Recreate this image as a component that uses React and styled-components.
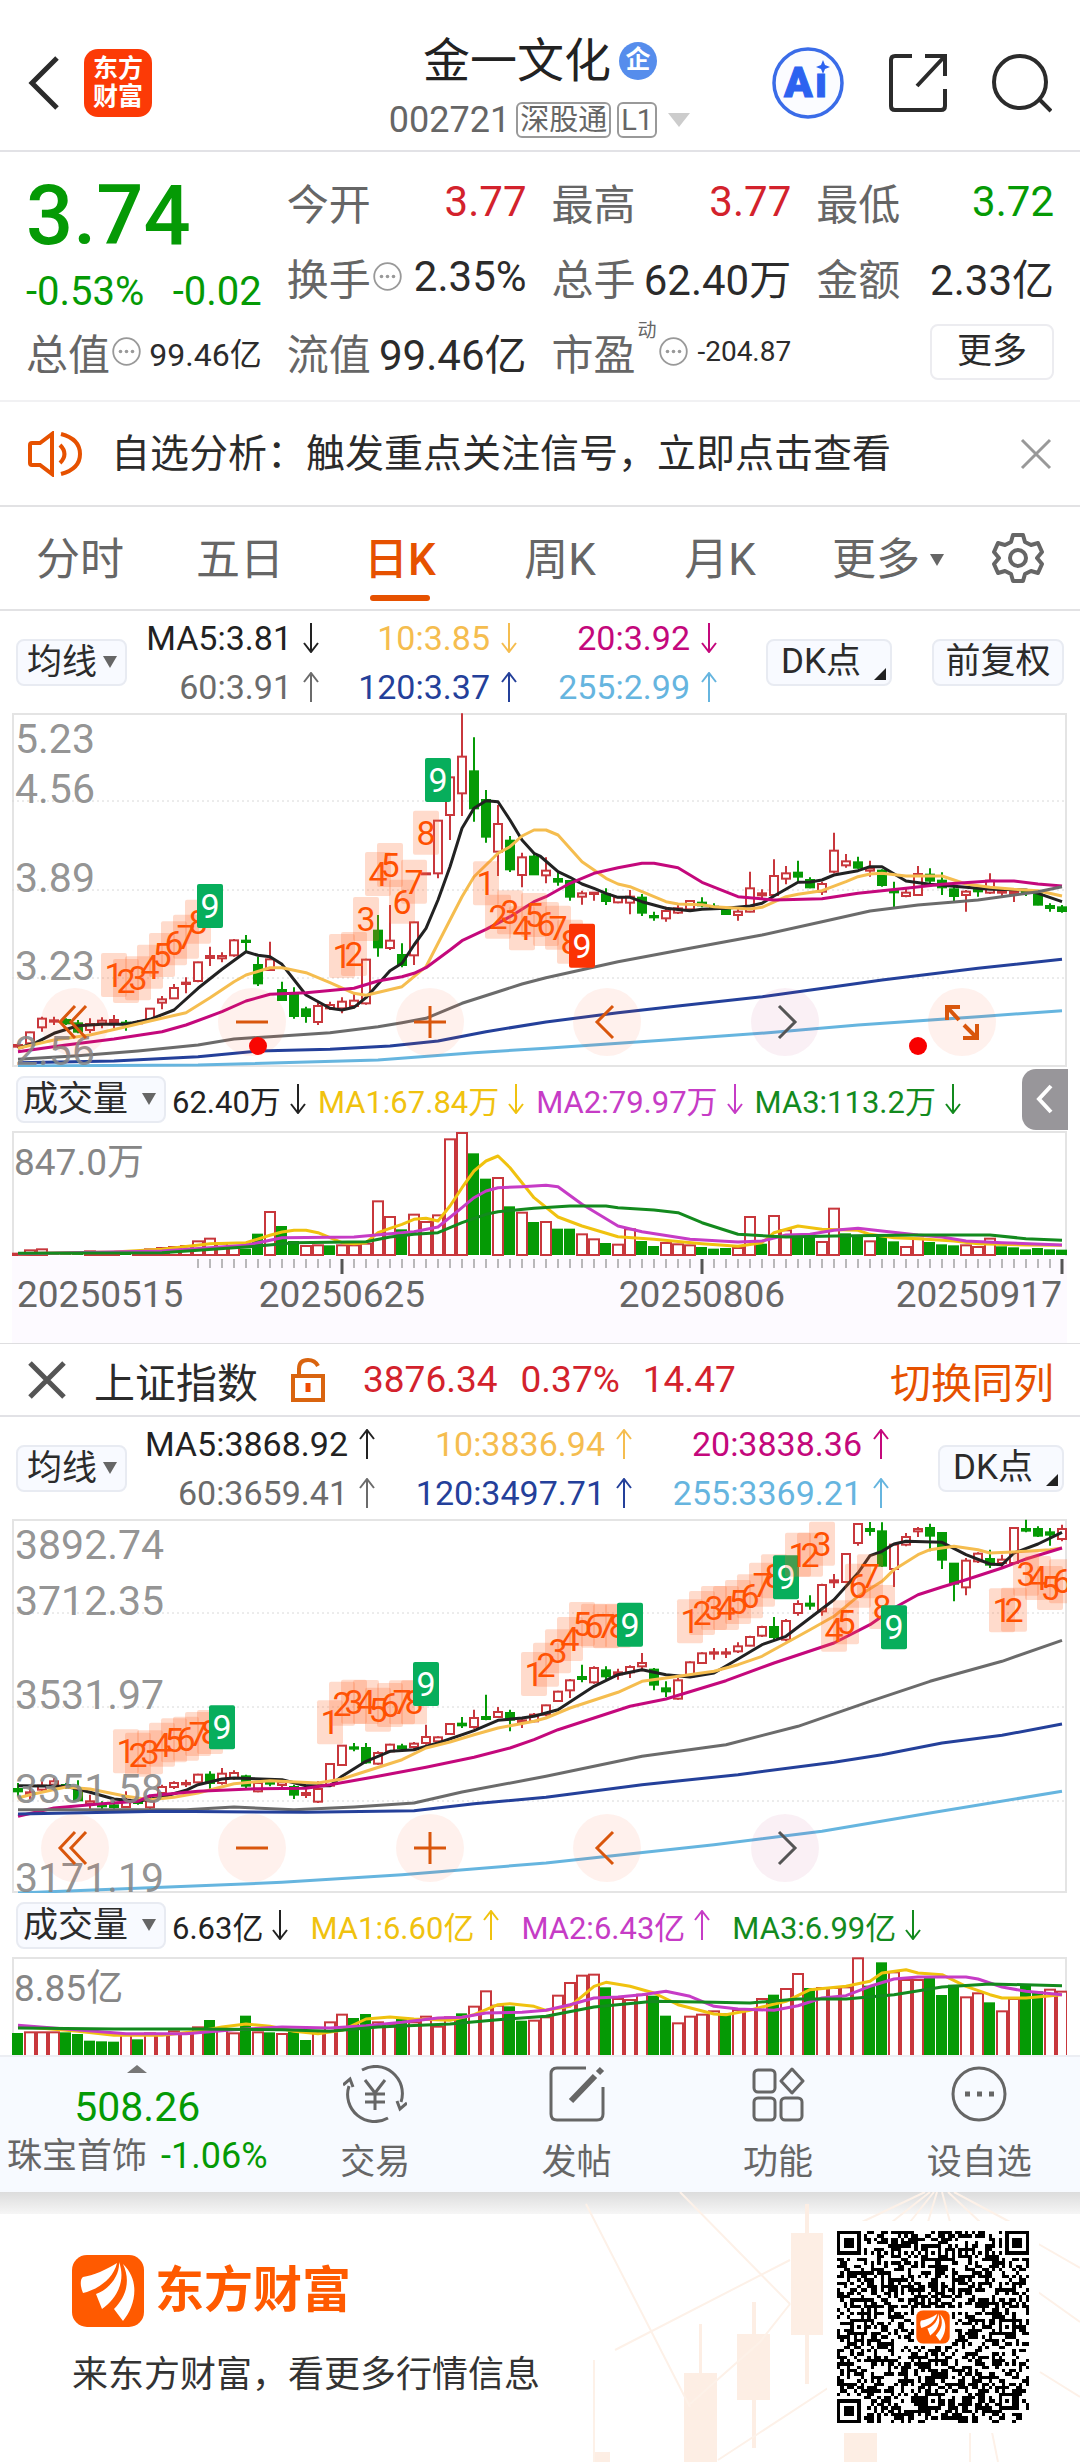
import React, { useMemo, useState } from 'react';
import styled, { createGlobalStyle, css } from 'styled-components';

const GlobalStyle = createGlobalStyle`
  * {
    box-sizing: border-box;
  }
  body {
    margin: 0;
    background: #fff;
    color: #2b2b2b;
    font-family: Roboto, 'Noto Sans CJK SC', sans-serif;
    font-size: 34px;
  }
  button, select {
    font: inherit;
    color: inherit;
    margin: 0;
    padding: 0;
    border: none;
    background: none;
    cursor: pointer;
  }
  svg {
    display: block;
  }
`;

const UP = '#c8373c';
const DOWN = '#059a05';
const ORANGE = '#e65100';
const LINE_COLORS = ['#222', '#f5bd4f', '#c4087c', '#6b6b6b', '#24409a', '#66b5df'];
const VOLUME_COLORS = ['#f0c20f', '#c63cc6', '#138a1e'];
const STEP = 12;

/* ---------- header ---------- */

const Header = styled.header`
  display: grid;
  grid-template-columns: 1fr auto 1fr;
  align-items: center;
  height: 152px;
  padding: 16px 28px 0;
  border-bottom: 2px solid #e2e2e6;
`;

const HeaderSide = styled.div`
  display: flex;
  align-items: center;
  justify-content: ${({ $end }) => ($end ? 'flex-end' : 'flex-start')};
  gap: ${({ $end }) => ($end ? '44px' : '24px')};
`;

const AppBadge = styled.a`
  width: 68px;
  height: 68px;
  padding: 6px 0;
  border-radius: 14px;
  background: #fc3a06;
  color: #fff;
  font-size: 25px;
  font-weight: 700;
  line-height: 28px;
  text-align: center;
  text-decoration: none;
`;

const TitleBlock = styled.div`
  display: flex;
  flex-direction: column;
  align-items: center;
  margin-top: 14px;
`;

const StockName = styled.h1`
  display: flex;
  align-items: center;
  gap: 8px;
  margin: 0;
  font-size: 47px;
  font-weight: 400;
  line-height: 60px;
  color: #222;
`;

const CompanyMark = styled.span`
  width: 38px;
  height: 38px;
  border-radius: 50%;
  background: #568dec;
  color: #fff;
  font-size: 25px;
  font-weight: 700;
  line-height: 36px;
  text-align: center;
`;

const StockCode = styled.div`
  display: flex;
  align-items: center;
  gap: 6px;
  height: 58px;
  font-size: 36px;
  color: #666;
`;

const Tag = styled.span`
  height: 36px;
  padding: 0 2px;
  border: 2px solid #999;
  border-radius: 6px;
  font-size: 29px;
  line-height: 32px;
`;

/* ---------- quote ---------- */

const Quote = styled.section`
  display: grid;
  grid-template-columns: 236fr 240fr 240fr 238fr;
  grid-auto-rows: 75px;
  column-gap: 25px;
  padding: 12px 26px 11px;
  border-bottom: 2px solid #f1f1f3;
`;

const PriceCell = styled.div`
  grid-row: span 2;
  color: ${DOWN};
`;

const Price = styled.div`
  font-size: 83px;
  font-weight: 500;
  line-height: 104px;
`;

const Change = styled.div`
  display: flex;
  justify-content: space-between;
  font-size: 40px;
  line-height: 48px;
`;

const QuoteCell = styled.div`
  display: flex;
  align-items: center;
  justify-content: space-between;
  white-space: nowrap;
`;

const QuoteLabel = styled.span`
  display: flex;
  align-items: center;
  gap: 2px;
  font-size: 42px;
  color: #666;
`;

const QuoteValue = styled.span`
  font-size: ${({ $size }) => $size || 42}px;
  color: ${({ $color }) => $color || '#2b2b2b'};
`;

const Sup = styled.sup`
  align-self: flex-start;
  font-size: 19px;
  line-height: 20px;
`;

const MoreButton = styled.button`
  justify-self: end;
  align-self: center;
  width: 124px;
  height: 56px;
  border: 2px solid #ececf0;
  border-radius: 8px;
  font-size: 35px;
  line-height: 48px;
`;

/* ---------- alert + tabs ---------- */

const Alert = styled.section`
  display: flex;
  align-items: center;
  height: 105px;
  padding: 0 28px;
  border-bottom: 2px solid #e2e2e4;
`;

const AlertText = styled.p`
  flex: 1;
  margin: 0 0 0 29px;
  font-size: 39px;
  line-height: 56px;
`;

const Tabs = styled.nav`
  display: grid;
  grid-template-columns: repeat(5, 160fr) 176fr 104fr;
  height: 104px;
  border-bottom: 2px solid #e2e2e4;
`;

const Tab = styled.button`
  position: relative;
  display: flex;
  align-items: center;
  justify-content: center;
  gap: 10px;
  padding-top: 3px;
  font-size: 44px;
  line-height: 60px;
  color: #666;
  ${({ $active }) =>
    $active &&
    css`
      color: ${ORANGE};
      font-weight: 500;
      &::after {
        content: '';
        position: absolute;
        bottom: 8px;
        left: 50%;
        width: 60px;
        height: 6px;
        margin-left: -30px;
        border-radius: 3px;
        background: ${ORANGE};
      }
    `}
`;

const SettingsTab = styled(Tab)`
  justify-content: flex-start;
  padding: 0 0 0 16px;
`;

/* ---------- indicator rows ---------- */

const IndicatorBar = styled.div`
  display: flex;
  align-items: center;
  height: 102px;
  padding: 0 16px;
`;

const Picker = styled.label`
  display: flex;
  align-items: center;
  gap: ${({ $gap }) => $gap}px;
  height: 47px;
  padding: 0 8px 0 ${({ $pad }) => $pad}px;
  border: 2px solid #e8ebf2;
  border-radius: 8px;
  background: #f8faff;
  select {
    appearance: none;
    height: 43px;
    font-size: 35px;
    line-height: 43px;
    outline: none;
  }
`;

const CornerButton = styled.button`
  position: relative;
  width: ${({ $width }) => $width}px;
  height: 47px;
  padding-right: ${({ $corner }) => ($corner ? 16 : 0)}px;
  border: 2px solid #e8ebf2;
  border-radius: 8px;
  background: #f8faff;
  font-size: 35px;
  line-height: 42px;
  ${({ $corner }) =>
    $corner &&
    css`
      &::after {
        content: '';
        position: absolute;
        right: 4px;
        bottom: 4px;
        border-left: 12px solid transparent;
        border-bottom: 12px solid #222;
      }
    `}
`;

const Averages = styled.div`
  display: grid;
  grid-template-columns: ${({ $columns }) => $columns};
  grid-auto-rows: 49px;
  margin-right: auto;
`;

const Reading = styled.span`
  display: flex;
  align-items: center;
  justify-content: flex-end;
  gap: ${({ $gap }) => $gap || 11}px;
  color: ${({ $color }) => $color};
  white-space: nowrap;
`;

const ButtonGroup = styled.div`
  display: flex;
  gap: 40px;
`;

const VolumeBar = styled.div`
  position: relative;
  display: flex;
  align-items: center;
  gap: 6px;
  height: 64px;
  padding: 0 16px;
  font-size: 31px;
`;

const VolumeReadings = styled.div`
  display: flex;
  gap: ${({ $gap }) => $gap}px;
`;

const Drawer = styled.button`
  display: flex;
  align-items: center;
  justify-content: center;
  width: 46px;
  height: 61px;
  margin: 0 -4px 0 auto;
  border-radius: 14px 0 0 14px;
  background: #98969a;
`;

/* ---------- charts ---------- */

const ChartBox = styled.div`
  position: relative;
  margin: 0 13px 0 12px;
  svg {
    width: 100%;
    height: auto;
  }
`;

const AxisBox = styled(ChartBox)`
  background: #fdfaff;
`;

const Divider = styled.hr`
  height: 1px;
  margin: 0;
  border: none;
  background: #dedee0;
`;

const ChartControls = styled.div`
  position: absolute;
  left: 29px;
  right: 71px;
  bottom: 11px;
  display: flex;
  justify-content: space-between;
`;

const RoundButton = styled.button`
  display: flex;
  align-items: center;
  justify-content: center;
  width: 68px;
  height: 68px;
  border-radius: 50%;
  background: ${({ $muted }) => ($muted ? 'rgba(190, 40, 120, 0.07)' : 'rgba(255, 80, 30, 0.08)')};
  color: ${({ $muted }) => ($muted ? '#555' : '#d9560c')};
  visibility: ${({ $hidden }) => ($hidden ? 'hidden' : 'visible')};
  svg {
    width: 40px;
    height: 40px;
  }
`;

/* ---------- index ---------- */

const IndexBar = styled.section`
  display: flex;
  align-items: center;
  height: 73px;
  padding: 0 26px 0 28px;
  border-bottom: 2px solid #e2e2e6;
  font-size: 41px;
`;

const IndexName = styled.h2`
  margin: 0 33px 0 28px;
  font-size: 41px;
  font-weight: 400;
`;

const IndexValues = styled.div`
  display: flex;
  gap: 23px;
  margin-left: 38px;
  font-size: 37px;
  color: #d3222c;
`;

const SwitchLink = styled.a`
  margin-left: auto;
  color: ${ORANGE};
  text-decoration: none;
`;

/* ---------- bottom ---------- */

const BottomBar = styled.nav`
  display: grid;
  grid-template-columns: 274fr repeat(4, 201fr);
  height: 137px;
  background: #f7faff;
  border-top: 2px solid #eceef3;
`;

const Sector = styled.button`
  display: flex;
  flex-direction: column;
  align-items: center;
  padding-top: 8px;
  color: ${DOWN};
  strong {
    margin-top: 8px;
    font-size: 41px;
    font-weight: 400;
    line-height: 52px;
  }
  span {
    line-height: 46px;
    font-size: 36px;
    white-space: nowrap;
  }
  em {
    margin-right: 14px;
    font-style: normal;
    font-size: 35px;
    color: #666;
  }
`;

const Action = styled.button`
  display: flex;
  flex-direction: column;
  align-items: center;
  gap: 18px;
  padding-top: 8px;
  font-size: 35px;
  line-height: 44px;
  color: #666;
`;

const Footer = styled.footer`
  position: relative;
  display: flex;
  align-items: flex-start;
  justify-content: space-between;
  height: 270px;
  padding: 39px 51px 0 72px;
  overflow: hidden;
  background: #fff;
  &::before {
    content: '';
    position: absolute;
    top: 0;
    left: 0;
    right: 0;
    height: 22px;
    background: linear-gradient(#dcdcdc, #f6f6f6);
  }
`;

const FooterArt = styled.svg`
  position: absolute;
  right: 0;
  top: 0;
`;

const Brand = styled.div`
  position: relative;
  padding-top: 24px;
`;

const BrandRow = styled.div`
  display: flex;
  align-items: center;
  gap: 11px;
  font-size: 49px;
  font-weight: 700;
  line-height: 72px;
  color: #ff5a00;
`;

const Slogan = styled.p`
  margin: 22px 0 0;
  font-size: 36px;
  line-height: 52px;
  color: #333;
`;

const QrBox = styled.div`
  position: relative;
  margin: -10px;
  padding: 10px;
  background: #fff;
`;

/* ---------- data: distances from the top edge, three per pixel ---------- */

// [direction, high, body top, body bottom, low]
const stockCandles = [
  ['r', 1030, 1035, 1040, 1045], ['r', 995, 997, 1030, 1035], ['r', 950, 956, 982, 995], ['r', 950, 961, 965, 975],
  ['g', 955, 960, 970, 975], ['g', 960, 970, 995, 1000], ['r', 955, 972, 990, 1000], ['r', 952, 962, 970, 985],
  ['r', 945, 960, 966, 985], ['g', 960, 968, 972, 992], ['r', 960, 967, 969, 975], ['r', 924, 926, 960, 962],
  ['r', 888, 898, 908, 928], ['r', 852, 864, 895, 897], ['r', 832, 848, 852, 880], ['r', 785, 787, 843, 847],
  ['r', 740, 768, 774, 798], ['r', 757, 768, 775, 787], ['r', 717, 721, 766, 770], ['g', 705, 722, 726, 753],
  ['g', 770, 795, 850, 858], ['r', 725, 778, 810, 812], ['g', 845, 870, 900, 903], ['g', 862, 882, 948, 956],
  ['g', 920, 928, 948, 968], ['r', 905, 918, 966, 975], ['r', 905, 915, 925, 930], ['r', 892, 905, 925, 940],
  ['r', 880, 902, 918, 925], ['r', 776, 779, 910, 914], ['g', 645, 692, 742, 770], ['r', 615, 722, 744, 750],
  ['g', 730, 765, 795, 802], ['r', 665, 667, 766, 795], ['r', 519, 520, 522, 523], ['r', 360, 362, 520, 535],
  ['r', 228, 232, 345, 420], ['r', 40, 170, 280, 348], ['g', 112, 214, 325, 365], ['g', 270, 300, 410, 428],
  ['r', 315, 372, 455, 528], ['g', 408, 422, 508, 516], ['r', 458, 472, 525, 562], ['g', 460, 470, 523, 525],
  ['r', 472, 512, 526, 550], ['g', 515, 537, 545, 557], ['g', 540, 543, 590, 602], ['r', 572, 580, 590, 614],
  ['r', 577, 578, 582, 602], ['g', 565, 583, 603, 615], ['r', 590, 592, 607, 610], ['r', 570, 590, 608, 643],
  ['g', 582, 593, 638, 648], ['g', 635, 648, 652, 662], ['r', 620, 633, 655, 665], ['r', 612, 625, 638, 642],
  ['r', 600, 603, 628, 632], ['g', 592, 608, 616, 622], ['g', 610, 620, 624, 630], ['g', 620, 625, 642, 645],
  ['r', 625, 635, 645, 662], ['r', 515, 565, 635, 637], ['r', 568, 580, 586, 600], ['r', 478, 528, 585, 590],
  ['r', 498, 520, 536, 553], ['g', 482, 518, 530, 543], ['g', 532, 540, 562, 565], ['r', 545, 552, 575, 585],
  ['r', 398, 452, 515, 520], ['r', 462, 484, 496, 503], ['g', 470, 487, 503, 506], ['r', 482, 505, 512, 530],
  ['g', 508, 512, 555, 560], ['g', 545, 570, 577, 622], ['r', 562, 578, 588, 592], ['r', 498, 522, 585, 588],
  ['g', 505, 524, 542, 550], ['g', 517, 542, 562, 585], ['g', 560, 568, 588, 603], ['r', 570, 575, 585, 635],
  ['g', 560, 568, 574, 590], ['r', 520, 542, 578, 582], ['r', 565, 572, 578, 592], ['r', 568, 576, 582, 606],
  ['g', 570, 575, 579, 588], ['g', 575, 580, 614, 616], ['g', 610, 618, 624, 635], ['g', 615, 622, 633, 638],
];

const stockLines = [
  '0,1045 1.5,1028 3,1000 5,977 7,973 9,973 11,958 13,930 15,865 17,808 19,755 20,766 21,770 22,793 24,885 26,925 27,930 28,922 29,893 31,812 32,790 33,735 34,685 35,600 36,500 37,385 38,325 39,302 40,305 41,360 42,420 43,460 43.5,468 45,515 46,532 47,552 48,565 49,580 50,592 51,592 52,605 53,615 54,625 56,632 57,628 59,625 61,618 62,610 63,588 65,547 66,546 67,540 68,525 70,512 71,500 72,500 74,543 76,553 79,562 81,568 84,570 85,580 87,605',
  '0,1045 3,1020 6,1005 9,980 11,963 14,938 16,893 18,845 19,825 21,803 22,803 24,818 26,848 28,880 29,886 32,860 34,800 36,660 37,590 38,530 40,460 41,440 42,408 43,390 44,390 45,405 47,485 49,535 50,552 51,560 53,590 54,605 55,612 57,614 58,620 61,627 62,622 64,590 65,583 67,572 69,545 70,530 71,522 72,520 74,528 77,528 78,540 79,552 81,562 83,568 85,572 87,588',
  '0,1055 4,1035 8,1017 12,995 14,975 17,935 19,903 21,883 24,878 28,865 30,843 32,830 33,820 34,803 36,750 37,722 39,688 41,650 43,605 44,590 46,550 48,520 50,503 52,490 53,490 55,503 57,547 60,590 63,600 67,596 70,580 74,565 77,553 81,543 83,543 85,552 87,558',
  '0,1078 5,1067 10,1053 15,1035 18,1017 21,1010 26,998 30,980 32,968 34,955 37,910 40,875 42,852 44,833 50,785 56,745 62,705 67,665 71,633 75,615 80,600 85,575 87,560',
  '0,1088 8,1083 15,1070 20,1053 26,1048 31,1038 35,1023 39,995 44,966 50,938 55,918 62,890 68,860 72,840 80,805 87,778',
  '0,1098 15,1095 30,1080 38,1058 44,1045 54,1020 63,997 70,975 80,950 87,932',
];

// [first candle, centre of each number, colour of the closing 9]
const stockCounts = [
  [8, [825, 843, 835, 800, 765, 730, 710, 665, 618], '#07ae5c'],
  [27, [768, 762, 657, 522, 495, 605, 545, 398, 240], '#07ae5c'],
  [39, [550, 650, 637, 685, 645, 672, 683, 725, 737], '#fb3304'],
];

const indexCandles = [
  ['g', 850, 868, 875, 890], ['r', 860, 878, 884, 898], ['r', 845, 858, 870, 880], ['r', 835, 845, 855, 862],
  ['g', 850, 856, 862, 868], ['g', 842, 868, 902, 905], ['r', 885, 905, 912, 930], ['g', 905, 915, 920, 930],
  ['g', 905, 917, 922, 927], ['r', 875, 900, 922, 925], ['g', 898, 905, 910, 915], ['r', 890, 905, 923, 930],
  ['r', 855, 862, 880, 885], ['r', 845, 850, 862, 868], ['r', 840, 850, 854, 862], ['r', 822, 825, 848, 850],
  ['g', 815, 825, 850, 868], ['r', 805, 822, 850, 855], ['r', 812, 820, 835, 840], ['g', 825, 830, 858, 865],
  ['r', 845, 850, 875, 878], ['g', 838, 846, 852, 860], ['r', 840, 848, 856, 868], ['g', 855, 862, 885, 898],
  ['r', 868, 880, 886, 895], ['r', 845, 868, 906, 910], ['r', 790, 793, 858, 862], ['r', 736, 738, 796, 798],
  ['g', 730, 743, 747, 755], ['g', 730, 745, 788, 792], ['r', 755, 760, 792, 795], ['r', 732, 735, 755, 758],
  ['g', 732, 740, 745, 755], ['r', 727, 732, 742, 748], ['r', 675, 712, 730, 735], ['r', 710, 713, 725, 728],
  ['r', 670, 673, 703, 706], ['g', 652, 672, 677, 685], ['r', 630, 655, 682, 687], ['g', 585, 652, 658, 662],
  ['r', 622, 637, 652, 655], ['g', 630, 640, 660, 695], ['r', 655, 662, 668, 685], ['r', 640, 645, 665, 668],
  ['r', 615, 617, 645, 650], ['r', 573, 576, 604, 606], ['r', 538, 542, 572, 595], ['g', 495, 532, 538, 548],
  ['r', 500, 505, 548, 552], ['g', 500, 512, 530, 540], ['r', 507, 518, 524, 540], ['r', 497, 502, 518, 535],
  ['r', 460, 490, 500, 515], ['g', 505, 510, 555, 572], ['g', 545, 566, 575, 592], ['r', 535, 542, 597, 600],
  ['r', 485, 488, 530, 532], ['r', 458, 461, 490, 492], ['r', 445, 458, 462, 480], ['r', 445, 458, 462, 475],
  ['r', 428, 440, 455, 460], ['r', 408, 412, 438, 440], ['r', 378, 382, 408, 412], ['g', 352, 382, 412, 420],
  ['r', 358, 364, 420, 425], ['r', 302, 313, 340, 348], ['g', 287, 312, 318, 330], ['r', 252, 256, 335, 348],
  ['r', 223, 242, 248, 265], ['r', 160, 163, 247, 250], ['r', 70, 73, 130, 138], ['g', 67, 88, 94, 108],
  ['g', 68, 95, 198, 202], ['r', 130, 135, 208, 262], ['r', 100, 112, 135, 140], ['r', 82, 88, 95, 112],
  ['g', 72, 85, 108, 155], ['g', 97, 100, 180, 208], ['g', 190, 192, 252, 305], ['r', 175, 183, 263, 287],
  ['r', 158, 162, 185, 190], ['g', 150, 178, 195, 205], ['r', 165, 180, 190, 208], ['r', 82, 85, 190, 193],
  ['g', 60, 88, 93, 98], ['g', 80, 88, 108, 112], ['g', 85, 98, 105, 138], ['r', 75, 88, 118, 125],
];

const indexLines = [
  '0,858 4,860 6,878 8,898 10,905 12,892 14,872 15,855 17,838 18,835 22,840 24,858 26,858 27,830 29,785 31,755 33,750 35,730 38,693 40,662 42,655 43,650 45,630 48,560 50,525 52,510 54,525 56,532 58,520 60,478 62,435 64,410 66,355 68,300 70,220 71,168 72,155 73,133 74,125 77,128 79,165 81,193 82,195 83,160 85,133 87,98',
  '0,895 1,885 4,862 6,868 9,890 11,900 13,893 15,880 18,852 21,843 25,850 27,838 29,815 32,780 34,745 36,727 38,705 40,685 43,665 44,655 46,625 50,578 52,545 54,535 58,515 60,495 62,470 64,430 66,390 68,350 70,290 72,245 73,210 75,165 76,150 78,140 80,150 81,160 84,155 86,150 87,145',
  '0,950 3,925 7,912 10,905 11,888 15,875 20,867 24,866 26,855 30,830 34,803 38,773 41,745 43,720 45,690 48,655 51,620 54,598 59,543 63,490 68,430 71,375 73,325 75,285 77,262 79,240 82,205 84,178 87,145',
  '0,930 8,930 14,930 18,922 23,930 28,922 33,910 37,877 44,830 52,770 59,735 65,680 71,605 76,545 82,485 87,422',
  '0,943 12,935 24,938 33,933 38,912 44,893 52,855 60,825 68,788 72,765 77,730 82,707 87,673',
  '0,1180 12,1163 22,1148 32,1125 44,1090 58,1035 67,995 76,940 87,875',
];

const indexCounts = [
  [9, [755, 765, 758, 735, 722, 717, 703, 697, 683], '#07ae5c'],
  [26, [668, 612, 606, 607, 630, 616, 608, 608, 553], '#07ae5c'],
  [43, [523, 495, 455, 418, 373, 378, 380, 378, 375], '#07ae5c'],
  [56, [365, 340, 325, 325, 307, 290, 255, 230, 233], '#07ae5c'],
  [65, [165, 165, 132, 390, 368, 258, 230, 322, 383], '#07ae5c'],
  [82, [332, 330, 222, 235, 265, 245], '#07ae5c'],
];

const stockVolume =
  'r575 r565 r562 g575 g575 g573 r568 r573 r572 g575 r570 r562 r558 r555 r552 r538 r530 r545 r555 g560 g515 r450 g492 g537 r552 r550 g550 r550 r550 r545 r418 r465 g502 r458 r480 r460 r232 r213 g274 g350 r348 g433 r452 g480 r480 g500 g500 r517 r532 g543 r548 r502 g537 g552 r543 r547 r550 g555 g560 g558 r558 r465 g545 r462 r505 g517 g520 r540 r440 g514 g520 r538 g525 g538 r555 r530 g540 g547 g550 r550 r555 r530 g553 g556 g562 g558 g562 g563';

const stockVolumeLines = [
  '0,578 8,573 12,565 16,548 19,545 21,523 22,513 23,508 24,508 25,515 26,530 27,545 28,548 29,545 30,515 31,502 32,490 33,475 34,472 35,480 36,435 37,380 38,330 39,300 40,285 41,320 43,410 45,468 47,495 50,527 53,535 57,548 60,556 62,545 63,515 65,495 67,505 70,508 71,520 73,530 75,533 78,540 80,548 84,552 87,553',
  '0,578 12,570 19,553 22,530 28,528 31,518 33,512 35,498 37,440 38,410 39,390 40,380 42,377 44,373 45,377 47,430 50,495 52,512 56,535 60,543 62,540 64,522 66,520 68,508 70,502 72,510 75,522 77,528 79,540 82,545 87,552',
  '0,577 12,575 20,555 23,545 29,542 31,528 33,520 35,515 37,485 39,460 40,452 43,442 46,435 49,435 50,440 53,447 55,455 57,485 60,520 64,528 68,525 75,522 81,522 84,533 87,538',
];

const indexVolume =
  'g427 r425 r425 r425 g425 g430 g450 g452 g453 r430 g446 r428 r430 r422 r430 r410 g388 r420 r428 g375 r425 g425 r430 g422 g448 r425 r395 r372 g382 g370 r395 r400 g382 r395 r378 r408 r380 g368 r348 r302 r345 g347 g390 r390 r380 r315 r277 r255 r252 g290 r325 r328 r312 g315 g375 r398 r378 r372 r362 g368 r358 r355 r325 g312 r295 r250 g292 r292 r292 r290 r203 g285 g215 r245 r268 r268 g262 g313 g282 r320 r308 g335 r362 r325 g285 g302 r297 r303';

const indexVolumeLines = [
  '0,410 5,425 8,437 12,437 15,425 17,412 19,403 21,410 23,425 25,432 27,422 29,388 31,382 33,388 36,392 38,375 40,345 41,342 43,350 44,362 46,350 47,320 48,290 49,278 51,290 53,310 55,345 58,373 59,375 61,362 62,352 64,335 66,300 69,290 71,275 72,250 74,240 75,250 77,255 79,290 81,315 82,325 84,325 87,315',
  '0,407 4,418 9,432 14,432 18,420 22,412 26,415 29,408 32,398 35,385 37,383 39,370 42,368 44,362 46,345 48,325 50,322 52,315 54,305 56,320 58,350 60,358 63,362 65,348 67,325 69,318 71,290 73,268 75,262 79,262 80,268 82,292 84,305 87,315',
  '0,415 8,418 15,418 22,420 26,425 30,412 36,403 40,390 44,380 48,352 53,335 58,338 61,340 65,328 69,328 73,315 77,292 81,283 87,288',
];

/* ---------- drawing helpers ---------- */

const xOf = (i) => 6 + i * STEP;
const toPoints = (line, top) =>
  line
    .split(' ')
    .map((pair) => {
      const [i, v] = pair.split(',').map(Number);
      return `${xOf(i)},${((v - top) / 3).toFixed(1)}`;
    })
    .join(' ');

function Lines({ lines, colors, top }) {
  return lines.map((line, i) => (
    <polyline
      key={colors[i]}
      points={toPoints(line, top)}
      fill="none"
      stroke={colors[i]}
      strokeWidth="3"
      strokeLinejoin="round"
    />
  ));
}

function Candle({ index, candle, top }) {
  const [dir, h, t, b, l] = candle;
  const x = xOf(index);
  const [high, bodyTop, bodyBottom, low] = [h, t, b, l].map((v) => (v - top) / 3);
  const color = dir === 'r' ? UP : DOWN;
  const height = Math.max(bodyBottom - bodyTop, 1);
  return (
    <g stroke={color} strokeWidth="2">
      <path d={`M${x} ${high}V${bodyTop}M${x} ${bodyBottom}V${low}`} />
      <rect x={x - 4} y={bodyTop} width="8" height={height} fill={dir === 'r' ? '#fff' : color} />
    </g>
  );
}

function Counts({ groups, top }) {
  return groups.map(([start, centres, closing]) => (
    <g key={start} fontSize="34" textAnchor="middle">
      {centres.map((v, i) => {
        const x = xOf(start + i);
        const y = (v - top) / 3;
        const last = i === 8;
        return (
          <g key={i}>
            <rect
              x={x - 13}
              y={y - 22}
              width="26"
              height="44"
              rx="2"
              fill={last ? closing : '#ff6a2b'}
              fillOpacity={last ? 1 : 0.24}
            />
            <text x={x} y={y + 12} fill={last ? '#fff' : '#ff5000'}>
              {i + 1}
            </text>
          </g>
        );
      })}
    </g>
  ));
}

function PriceChart({ height, top, grid, labels, candles, lines, counts, dots = [], title }) {
  return (
    <svg viewBox={`0 0 1055 ${height}`} role="img" aria-label={title}>
      <rect x="1" y="1" width="1053" height={height - 2} fill="none" stroke="#e4e4e4" strokeWidth="2" />
      {grid.map((y) => (
        <path key={y} d={`M0 ${y}H1055`} stroke="#d8d8d8" strokeDasharray="2 3" />
      ))}
      {candles.map((candle, i) => (
        <Candle key={i} index={i} candle={candle} top={top} />
      ))}
      <Lines lines={lines} colors={LINE_COLORS} top={top} />
      <Counts groups={counts} top={top} />
      {labels.map(([text, y]) => (
        <text key={text} x="3" y={y} fontSize="41" fill="#868686" fillOpacity="0.9">
          {text}
        </text>
      ))}
      {dots.map((x) => (
        <circle key={x} cx={x} cy="333" r="9" fill="#f80000" />
      ))}
    </svg>
  );
}

function VolumeChart({ height, top, base, bars, lines, label, labelY, title }) {
  return (
    <svg viewBox={`0 0 1055 ${height}`} role="img" aria-label={title}>
      <path d={`M1 ${height}V1H1054V${height}`} fill="none" stroke="#e4e4e4" strokeWidth="2" />
      <text x="2" y={labelY} fontSize="37" fill="#868686">
        {label}
      </text>
      {bars.split(' ').map((bar, i) => {
        const y = (Number(bar.slice(1)) - top) / 3;
        const rising = bar[0] === 'r';
        return (
          <rect
            key={i}
            x={xOf(i) - (rising ? 5 : 6)}
            y={y + 1}
            width={rising ? 10 : 11}
            height={base - y}
            fill={rising ? '#fff' : DOWN}
            stroke={rising ? UP : 'none'}
            strokeWidth="2"
          />
        );
      })}
      <Lines lines={lines} colors={VOLUME_COLORS} top={top} />
    </svg>
  );
}

function DateAxis() {
  const ticks = Array.from({ length: 73 }, (_, i) => i + 15);
  return (
    <svg viewBox="0 0 1055 87" role="img" aria-label="日期">
      {ticks.map((i) => {
        const major = i % 30 === 27;
        return (
          <path
            key={i}
            d={`M${xOf(i)} 3V${major ? 18 : 12}`}
            stroke={major ? '#555' : '#777'}
            strokeWidth={major ? 3 : 1}
          />
        );
      })}
      <g fontSize="37" fill="#666">
        <text x="5" y="51">20250515</text>
        <text x="330" y="51" textAnchor="middle">20250625</text>
        <text x="690" y="51" textAnchor="middle">20250806</text>
        <text x="1050" y="51" textAnchor="end">20250917</text>
      </g>
    </svg>
  );
}

/* ---------- icons ---------- */

const Stroke = ({ w, h = w, width = 4, children, ...rest }) => (
  <svg
    width={w}
    height={h}
    viewBox={`0 0 ${w} ${h}`}
    fill="none"
    stroke="currentColor"
    strokeWidth={width}
    aria-hidden="true"
    {...rest}
  >
    {children}
  </svg>
);

const Caret = ({ size = 14 }) => (
  <svg width={size} height="12" viewBox="0 0 14 12" fill="#666" aria-hidden="true">
    <path d="M0 0h14L7 12z" />
  </svg>
);

const Arrow = ({ up }) => (
  <Stroke w={16} h={30} width={2}>
    <path d={up ? 'M8 30V2M1 10L8 1L15 10' : 'M8 0V28M1 20L8 29L15 20'} />
  </Stroke>
);

const Dots = ({ size = 29 }) => (
  <svg width={size} height={size} viewBox="0 0 29 29" fill="#999" aria-hidden="true">
    <circle cx="14.5" cy="14.5" r="13.3" fill="none" stroke="#999" strokeWidth="1.8" />
    <circle cx="8.5" cy="14.5" r="1.8" />
    <circle cx="14.5" cy="14.5" r="1.8" />
    <circle cx="20.5" cy="14.5" r="1.8" />
  </svg>
);

const BrandMark = ({ size }) => (
  <svg width={size} height={size} viewBox="0 0 72 72" aria-hidden="true">
    <rect width="72" height="72" rx="15" fill="#ff5a00" />
    <g fill="#fff">
      <path d="M45 8C36 14 20 21 11 22C8 24 8 31 11 38C24 35 41 25 45 8z" />
      <path d="M47 7C48 20 38 34 24 39L30 54C42 46 55 28 47 7z" />
      <path d="M51 9C59 26 54 42 42 54L51 66C63 52 69 26 51 9z" />
    </g>
  </svg>
);

function QrCode() {
  const cells = useMemo(() => {
    const size = 57;
    const inFinder = (x, y) => (x < 8 && y < 8) || (x > size - 9 && y < 8) || (x < 8 && y > size - 9);
    const ring = (x, y, cx, cy) => Math.max(Math.abs(x - cx), Math.abs(y - cy));
    const aligned = [[28, 6], [6, 28], [50, 28], [28, 50], [50, 50]];
    let seed = 20250917;
    let path = '';
    for (let y = 0; y < size; y += 1) {
      for (let x = 0; x < size; x += 1) {
        seed = (seed * 1103515245 + 12345) % 2147483648;
        let on = (seed >> 16) % 100 < 50;
        if (inFinder(x, y)) {
          const d = Math.min(ring(x, y, 3, 3), ring(x, y, size - 4, 3), ring(x, y, 3, size - 4));
          on = d < 2 || d === 3;
        } else {
          const mark = aligned.find(([cx, cy]) => ring(x, y, cx, cy) < 3);
          if (mark) on = ring(x, y, mark[0], mark[1]) !== 1;
          else if (x === 6 || y === 6) on = (x + y) % 2 === 0;
        }
        if (ring(x, y, 28, 28) < 6) on = false;
        if (on) path += `M${x} ${y}h1v1h-1z`;
      }
    }
    return path;
  }, []);
  return (
    <svg width="192" height="192" viewBox="0 0 57 57" role="img" aria-label="二维码">
      <path d={cells} shapeRendering="crispEdges" />
      <svg x="23.5" y="23.5" width="10" height="10" viewBox="0 0 72 72">
        <BrandMark size={72} />
      </svg>
    </svg>
  );
}

/* ---------- composed parts ---------- */

const Averaged = ({ columns, items }) => (
  <Averages $columns={columns}>
    {items.map(([text, up], i) => (
      <Reading key={text} $color={LINE_COLORS[i]}>
        {text}
        <Arrow up={up} />
      </Reading>
    ))}
  </Averages>
);

const MethodPicker = () => (
  <Picker $gap={5} $pad={9}>
    <select aria-label="均线" defaultValue="均线">
      <option>均线</option>
    </select>
    <Caret />
  </Picker>
);

function VolumeHeader({ items, gap, children }) {
  return (
    <VolumeBar>
      <Picker $gap={13} $pad={5}>
        <select aria-label="成交量" defaultValue="成交量">
          <option>成交量</option>
        </select>
        <Caret />
      </Picker>
      <VolumeReadings $gap={gap}>
        {items.map(([text, up], i) => (
          <Reading key={text} $gap={9} $color={i ? VOLUME_COLORS[i - 1] : '#222'}>
            {text}
            <Arrow up={up} />
          </Reading>
        ))}
      </VolumeReadings>
      {children}
    </VolumeBar>
  );
}

function Controls({ expandable }) {
  return (
    <ChartControls>
      <RoundButton aria-label="最早">
        <Stroke w={40} width={3}><path d="M20 4L5 20L20 36M31 4L16 20L31 36" /></Stroke>
      </RoundButton>
      <RoundButton aria-label="缩小">
        <Stroke w={40} width={3}><path d="M4 20H36" /></Stroke>
      </RoundButton>
      <RoundButton aria-label="放大">
        <Stroke w={40} width={3}><path d="M4 20H36M20 4V36" /></Stroke>
      </RoundButton>
      <RoundButton aria-label="向前">
        <Stroke w={40} width={3}><path d="M26 4L10 20L26 36" /></Stroke>
      </RoundButton>
      <RoundButton aria-label="向后" $muted>
        <Stroke w={40} width={3}><path d="M14 4L30 20L14 36" /></Stroke>
      </RoundButton>
      <RoundButton aria-label="全屏" $hidden={!expandable}>
        <Stroke w={40} width={4}>
          <path d="M5 18V5H18M6 6L17 18M35 22V36H21M34 35L22 23" />
        </Stroke>
      </RoundButton>
    </ChartControls>
  );
}

const tabs = ['分时', '五日', '日K', '周K', '月K', '更多'];

function App() {
  const [activeTab, setActiveTab] = useState('日K');
  const [showAlert, setShowAlert] = useState(true);

  return (
    <>
      <GlobalStyle />
      <Header>
        <HeaderSide>
          <button aria-label="返回">
            <Stroke w={32} h={56} width={5}><path d="M29 3L4 28L29 53" /></Stroke>
          </button>
          <AppBadge href="#home">东方<br />财富</AppBadge>
        </HeaderSide>
        <TitleBlock>
          <StockName>
            金一文化
            <CompanyMark>企</CompanyMark>
          </StockName>
          <StockCode>
            002721
            <Tag>深股通</Tag>
            <Tag>L1</Tag>
            <svg width="28" height="14" viewBox="0 0 28 14" fill="#ccc" aria-hidden="true">
              <path d="M5 0h22L16 14z" />
            </svg>
          </StockCode>
        </TitleBlock>
        <HeaderSide $end>
          <button aria-label="智能助手">
            <svg width="72" height="72" viewBox="0 0 72 72" fill="#2c62f0">
              <circle cx="36" cy="36" r="34" fill="#fbfcff" stroke="#3a6ce8" strokeWidth="3.5" />
              <text y="50" fontSize="42" fontWeight="900" stroke="#2c62f0" strokeWidth="1">
                <tspan x="12">A</tspan>
                <tspan x="43">ı</tspan>
              </text>
              <path d="M51 13l2 5l5 2l-5 2l-2 5l-2-5l-5-2l5-2z" />
            </svg>
          </button>
          <button aria-label="分享">
            <Stroke w={60} width={4}>
              <path d="M24 3H7Q3 3 3 7V53Q3 57 7 57H53Q57 57 57 53V36M37 3H57V23M57 3L29 33" />
            </Stroke>
          </button>
          <button aria-label="搜索">
            <Stroke w={60} width={4}>
              <circle cx="28" cy="29" r="26" />
              <path d="M47 46L59 58" />
            </Stroke>
          </button>
        </HeaderSide>
      </Header>

      <Quote>
        <PriceCell>
          <Price>3.74</Price>
          <Change><span>-0.53%</span><span>-0.02</span></Change>
        </PriceCell>
        <QuoteCell><QuoteLabel>今开</QuoteLabel><QuoteValue $color="#d3222c">3.77</QuoteValue></QuoteCell>
        <QuoteCell><QuoteLabel>最高</QuoteLabel><QuoteValue $color="#d3222c">3.77</QuoteValue></QuoteCell>
        <QuoteCell><QuoteLabel>最低</QuoteLabel><QuoteValue $color={DOWN}>3.72</QuoteValue></QuoteCell>
        <QuoteCell><QuoteLabel>换手<Dots /></QuoteLabel><QuoteValue>2.35%</QuoteValue></QuoteCell>
        <QuoteCell><QuoteLabel>总手</QuoteLabel><QuoteValue>62.40万</QuoteValue></QuoteCell>
        <QuoteCell><QuoteLabel>金额</QuoteLabel><QuoteValue>2.33亿</QuoteValue></QuoteCell>
        <QuoteCell><QuoteLabel>总值<Dots /></QuoteLabel><QuoteValue $size={32}>99.46亿</QuoteValue></QuoteCell>
        <QuoteCell><QuoteLabel>流值</QuoteLabel><QuoteValue>99.46亿</QuoteValue></QuoteCell>
        <QuoteCell><QuoteLabel>市盈<Sup>动</Sup><Dots /></QuoteLabel><QuoteValue $size={28}>-204.87</QuoteValue></QuoteCell>
        <MoreButton>更多</MoreButton>
      </Quote>

      {showAlert && (
        <Alert>
          <Stroke w={54} h={46} width={4} color={ORANGE}>
            <path d="M4 12H12L24 3V43L12 34H4Q2 34 2 32V14Q2 12 4 12ZM32 14Q41 23 32 32M33 3Q52 8 52 23Q52 38 33 43" />
          </Stroke>
          <AlertText>自选分析：触发重点关注信号，立即点击查看</AlertText>
          <button aria-label="关闭" onClick={() => setShowAlert(false)}>
            <Stroke w={32} width={3} color="#999"><path d="M2 2L30 30M30 2L2 30" /></Stroke>
          </button>
        </Alert>
      )}

      <Tabs>
        {tabs.map((tab) => (
          <Tab key={tab} $active={tab === activeTab} onClick={() => setActiveTab(tab)}>
            {tab}
            {tab === '更多' && <Caret />}
          </Tab>
        ))}
        <SettingsTab aria-label="设置">
          <Stroke w={52} width={4}>
            <path d="M21 3H31L33 10L39 13L46 11L50 20L45 26L50 32L46 41L39 39L33 42L31 49H21L19 42L13 39L6 41L2 32L7 26L2 20L6 11L13 13L19 10Z" strokeLinejoin="round" />
            <circle cx="26" cy="26" r="8" />
          </Stroke>
        </SettingsTab>
      </Tabs>

      <IndicatorBar>
        <MethodPicker />
        <Averaged
          columns="192px 198px 200px"
          items={[['MA5:3.81'], ['10:3.85'], ['20:3.92'], ['60:3.91', true], ['120:3.37', true], ['255:2.99', true]]}
        />
        <ButtonGroup>
          <CornerButton $width={126} $corner>DK点</CornerButton>
          <CornerButton $width={132}>前复权</CornerButton>
        </ButtonGroup>
      </IndicatorBar>
      <ChartBox>
        <PriceChart
          title="日K线"
          height={354}
          top={39}
          grid={[88, 177, 265]}
          labels={[['5.23', 40], ['4.56', 90], ['3.89', 179], ['3.23', 267], ['2.56', 352]]}
          candles={stockCandles}
          lines={stockLines}
          counts={stockCounts}
          dots={[246, 906]}
        />
        <Controls expandable />
      </ChartBox>
      <VolumeHeader gap={12} items={[['62.40万'], ['MA1:67.84万'], ['MA2:79.97万'], ['MA3:113.2万']]}>
        <Drawer aria-label="展开">
          <Stroke w={18} h={30} width={4} color="#fff"><path d="M15 2L3 15L15 28" /></Stroke>
        </Drawer>
      </VolumeHeader>
      <ChartBox>
        <VolumeChart
          title="成交量"
          height={125}
          top={210}
          base={123}
          bars={stockVolume}
          lines={stockVolumeLines}
          label="847.0万"
          labelY={44}
        />
      </ChartBox>
      <AxisBox>
        <DateAxis />
      </AxisBox>
      <Divider />

      <IndexBar>
        <button aria-label="关闭指数">
          <Stroke w={38} width={5} color="#555"><path d="M2 2L36 36M36 2L2 36" /></Stroke>
        </button>
        <IndexName>上证指数</IndexName>
        <Stroke w={34} h={44} width={4} color="#d9640f">
          <path d="M2 18H32V42H2ZM8 18V11Q8 2 17 2Q24 2 27 8" />
          <path d="M17 25V34" stroke="#f04a00" strokeWidth="5" />
        </Stroke>
        <IndexValues><span>3876.34</span><span>0.37%</span><span>14.47</span></IndexValues>
        <SwitchLink href="#switch">切换同列</SwitchLink>
      </IndexBar>

      <IndicatorBar>
        <MethodPicker />
        <Averaged
          columns="248px 257px 257px"
          items={[
            ['MA5:3868.92', true], ['10:3836.94', true], ['20:3838.36', true],
            ['60:3659.41', true], ['120:3497.71', true], ['255:3369.21', true],
          ]}
        />
        <CornerButton $width={126} $corner>DK点</CornerButton>
      </IndicatorBar>
      <ChartBox>
        <PriceChart
          title="上证指数日K线"
          height={374}
          top={58}
          grid={[94, 188, 282]}
          labels={[['3892.74', 40], ['3712.35', 96], ['3531.97', 190], ['3351.58', 284], ['3171.19', 373]]}
          candles={indexCandles}
          lines={indexLines}
          counts={indexCounts}
        />
        <Controls />
      </ChartBox>
      <VolumeHeader gap={22} items={[['6.63亿'], ['MA1:6.60亿', true], ['MA2:6.43亿', true], ['MA3:6.99亿']]} />
      <ChartBox>
        <VolumeChart
          title="指数成交量"
          height={98}
          top={202}
          base={110}
          bars={indexVolume}
          lines={indexVolumeLines}
          label="8.85亿"
          labelY={44}
        />
      </ChartBox>

      <BottomBar>
        <Sector>
          <svg width="20" height="8" viewBox="0 0 20 8" fill="#777" aria-hidden="true"><path d="M10 0L20 8H0z" /></svg>
          <strong>508.26</strong>
          <span><em>珠宝首饰</em>-1.06%</span>
        </Sector>
        <Action>
          <Stroke w={64} h={58} width={3}>
            <path d="M19 5A27 27 0 0 1 58 37M45 53A27 27 0 0 1 6 21M0 20L7 14L10 22M64 38L57 44L54 36" />
            <path d="M22 15L32 28L42 15M32 28V45M22 29H42M22 37H42" />
          </Stroke>
          交易
        </Action>
        <Action>
          <Stroke w={58} width={3}>
            <path d="M38 3H9Q3 3 3 9V49Q3 55 9 55H49Q55 55 55 49V22" />
            <path d="M23 36L47 11M50 8L54 4" strokeWidth="6" />
          </Stroke>
          发帖
        </Action>
        <Action>
          <Stroke w={54} h={58} width={3}>
            <rect x="3" y="5" width="21" height="22" rx="4" />
            <rect x="3" y="33" width="21" height="22" rx="4" />
            <rect x="30" y="33" width="21" height="22" rx="4" />
            <path d="M41 4L52 16L41 28L30 16Z" strokeLinejoin="round" />
          </Stroke>
          功能
        </Action>
        <Action>
          <Stroke w={58} width={3}>
            <circle cx="29" cy="29" r="26" />
            <path d="M15 29h5M27 29h5M39 29h5" strokeWidth="5" />
          </Stroke>
          设自选
        </Action>
      </BottomBar>

      <Footer>
        <FooterArt width="500" height="270" viewBox="580 0 500 270" aria-hidden="true">
          <g fill="#fdeee4">
            <path d="M791 41h32v102h-32zM805 12h4v180h-4zM737 142h33v66h-33zM752 110h4v146h-4zM684 181h33v89h-33zM699 132h3v60h-3zM844 240h33v30h-33zM594 260h16v10h-16z" />
          </g>
          <g stroke="#fdf1e8" strokeWidth="2" fill="none">
            <path d="M680 0L790 112M586 12L690 215M615 158L790 68M718 268L828 196M690 212L760 150L790 112M594 270V168" />
            <path d="M925 0L862 30M930 0L892 30M934 0L910 30M937 0L928 30M942 0L950 30M948 0L980 30M954 0L1010 30M1035 50L1080 76M1038 100L1080 130M1040 180L1080 205M970 240V270M992 240L998 270" />
          </g>
        </FooterArt>
        <Brand>
          <BrandRow>
            <BrandMark size={72} />
            东方财富
          </BrandRow>
          <Slogan>来东方财富，看更多行情信息</Slogan>
        </Brand>
        <QrBox>
          <QrCode />
        </QrBox>
      </Footer>
    </>
  );
}

export default App;
